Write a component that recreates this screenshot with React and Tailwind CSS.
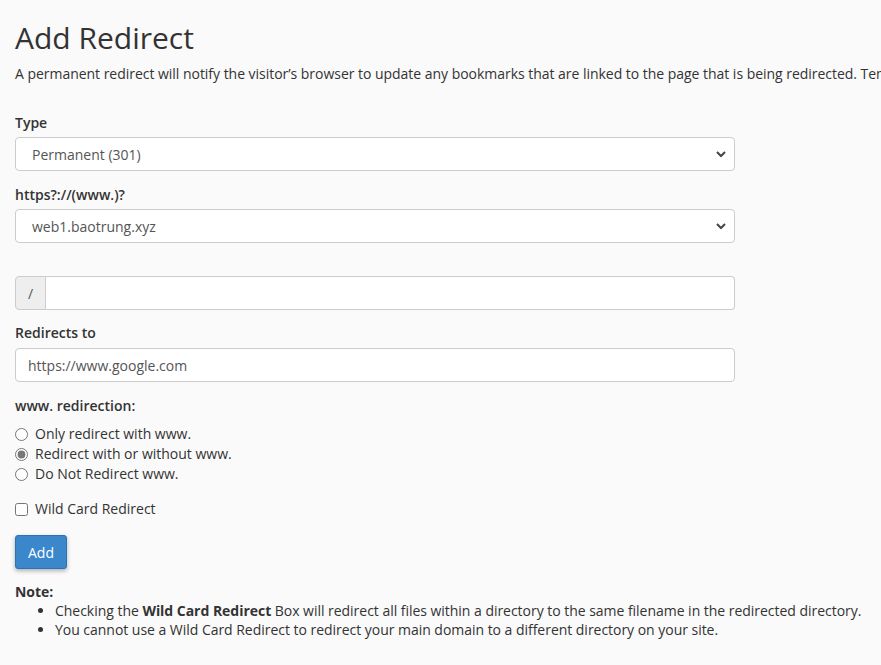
import React from 'react';

const Chevron = () => (
  <svg className="pointer-events-none absolute right-[9px] top-1/2 -translate-y-1/2" width="10" height="7" viewBox="0 0 10 7">
    <path d="M1 1.5 L5 5.5 L9 1.5" fill="none" stroke="#444" strokeWidth="2" />
  </svg>
);

function Select({ value, options }) {
  return (
    <div className="relative w-[720px]">
      <select
        defaultValue={value}
        className="block h-[34px] w-full appearance-none rounded border border-[#ccc] bg-white pl-4 pr-8 text-[14px] text-[#555] outline-none"
      >
        {options.map((o) => (
          <option key={o}>{o}</option>
        ))}
      </select>
      <Chevron />
    </div>
  );
}

export default function App() {
  return (
    <div className="min-h-[665px] overflow-hidden bg-[#fafafa] px-[15px] text-[#333]" style={{ fontFamily: '"Open Sans", sans-serif' }}>
      <h1 className="mt-[21px] mb-[10px] text-[30px] leading-[33px] font-normal">Add Redirect</h1>
      <p className="whitespace-nowrap text-[14px] leading-[20px] tracking-[-0.03px]">
        A permanent redirect will notify the visitor’s browser to update any bookmarks that are linked to the page that is being redirected. Temporary redirects will not update the visitor’s bookmarks.
      </p>

      <div className="mt-[29px]">
        <label className="mb-[4px] block text-[14px] leading-[20px] font-semibold">Type</label>
        <Select value="Permanent (301)" options={['Permanent (301)', 'Temporary (302)']} />
      </div>

      <div className="mt-[14px]">
        <label className="mb-[4px] block text-[14px] leading-[20px] font-semibold">https?://(www.)?</label>
        <Select value="web1.baotrung.xyz" options={['web1.baotrung.xyz', '** All Public Domains **']} />
      </div>

      <div className="mt-[33px] flex h-[34px] w-[720px]">
        <span className="flex w-[31px] items-center justify-center rounded-l border border-[#ccc] bg-[#eee] text-[14px] text-[#555]">/</span>
        <input className="h-full flex-1 rounded-r border border-l-0 border-[#ccc] bg-white px-3 text-[14px] outline-none" />
      </div>

      <div className="mt-[13px]">
        <label className="mb-[5px] block text-[14px] leading-[20px] font-semibold">Redirects to</label>
        <input
          defaultValue="https://www.google.com"
          className="block h-[34px] w-[720px] rounded border border-[#ccc] bg-white px-3 text-[14px] text-[#555] outline-none"
        />
      </div>

      <div className="mt-[14px]">
        <label className="block text-[14px] leading-[20px] font-semibold">www. redirection:</label>
        <div className="mt-[8px] text-[14px] leading-[20px]">
          {['Only redirect with www.', 'Redirect with or without www.', 'Do Not Redirect www.'].map((t, i) => (
            <label key={t} className="flex items-center">
              <input type="radio" name="www" defaultChecked={i === 1} className="m-0 h-[13px] w-[13px] accent-[#777]" />
              <span className="ml-[7px]">{t}</span>
            </label>
          ))}
        </div>
      </div>

      <label className="mt-[15px] flex items-center text-[14px] leading-[20px]">
        <input type="checkbox" className="m-0 h-[13px] w-[13px]" />
        <span className="ml-[7px]">Wild Card Redirect</span>
      </label>

      <button className="mt-[16px] h-[34px] w-[52px] rounded-[3px] border border-[#2d73b1] bg-[#3a87cc] text-[14px] text-white shadow-[0_2px_4px_rgba(0,0,0,0.3)]">
        Add
      </button>

      <div className="mt-[13px] text-[14px] leading-[19px] tracking-[-0.03px]">
        <strong className="font-bold">Note:</strong>
        <ul className="list-disc pl-[40px]">
          <li>
            Checking the <strong className="font-bold">Wild Card Redirect</strong> Box will redirect all files within a directory to the same filename in the redirected directory.
          </li>
          <li>You cannot use a Wild Card Redirect to redirect your main domain to a different directory on your site.</li>
        </ul>
      </div>
    </div>
  );
}
